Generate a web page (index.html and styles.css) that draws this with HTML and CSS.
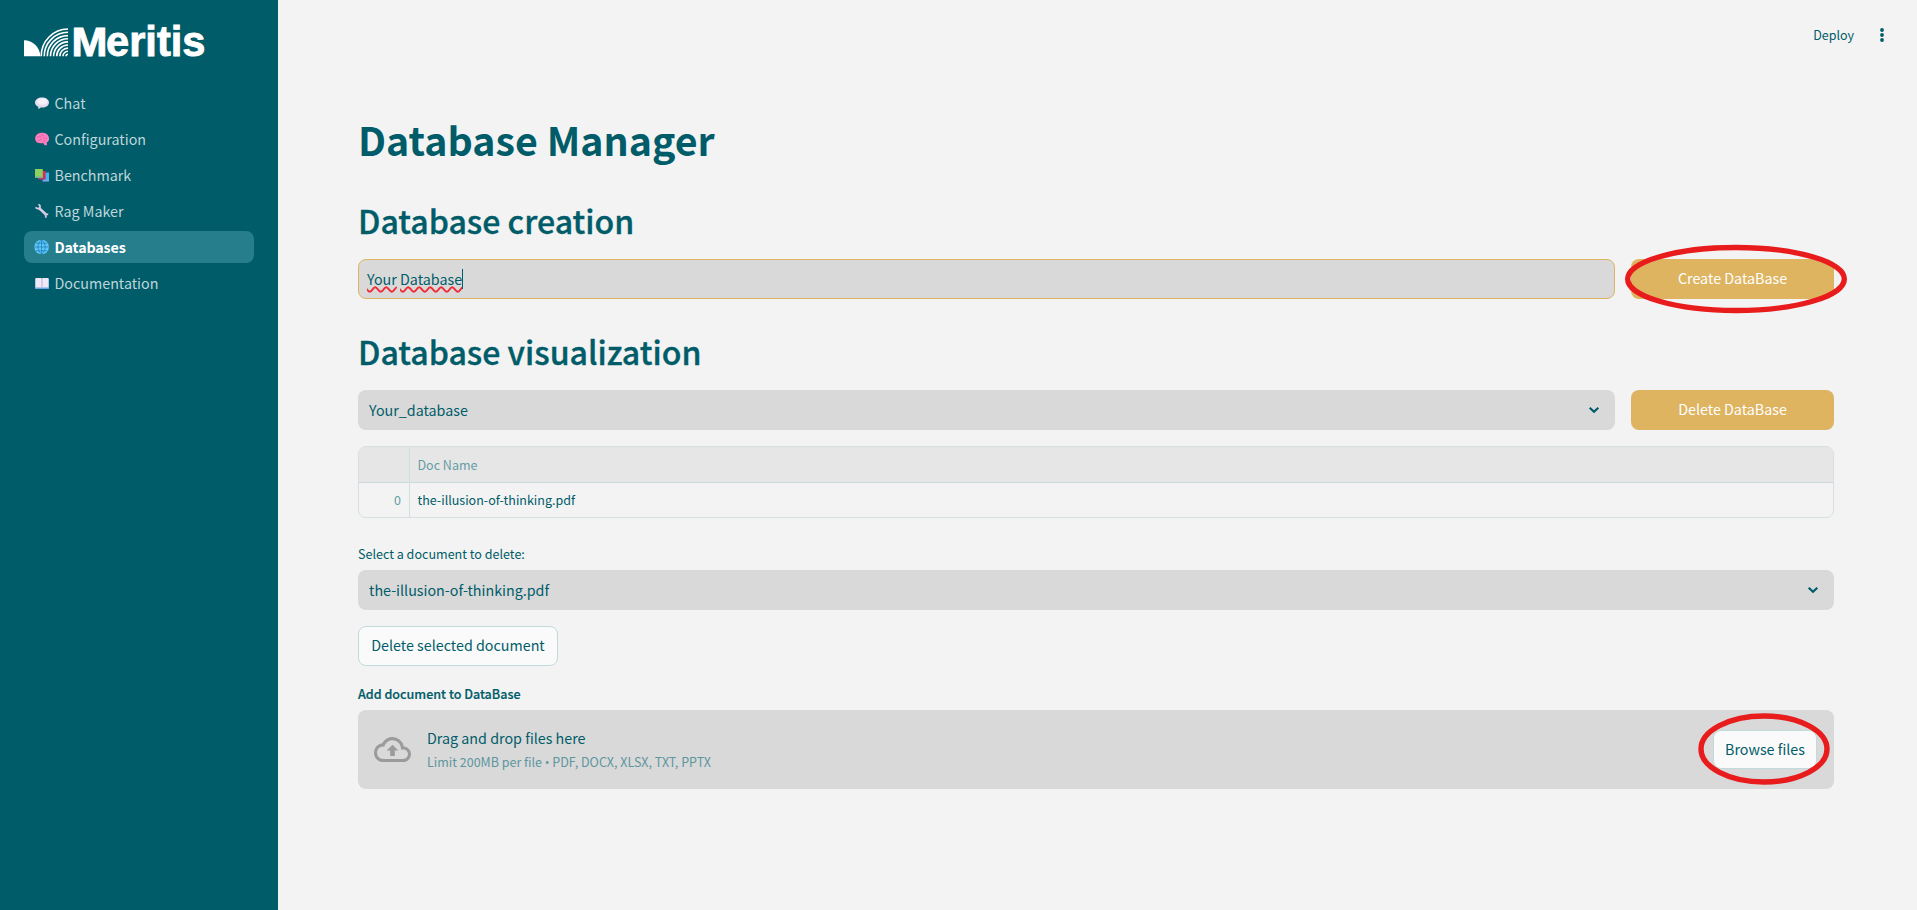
FILE: index.html
```html
<!DOCTYPE html>
<html lang="en">
<head>
<meta charset="utf-8">
<title>Database Manager</title>
<link rel="stylesheet" href="styles.css">
</head>
<body>
<div class="app">
  <aside class="sidebar">
    <svg class="logo" width="230" height="36" viewBox="0 0 230 36">
      <path d="M0 16.200A16.300 16.300 0 0 1 16.300 32.300H0Z" fill="#fff"/>
      <g fill="none" stroke="#fff" stroke-width="1.600">
        <path d="M17.200 32.300A26.800 27.300 0 0 1 44 5"/>
        <path d="M20.200 32.300A23.800 24 0 0 1 44 8.300"/>
        <path d="M23.300 32.300A20.700 20.700 0 0 1 44 11.600"/>
        <path d="M26.500 32.300A17.500 17.500 0 0 1 44 14.800"/>
        <path d="M29.600 32.300A14.400 14.400 0 0 1 44 17.900"/>
        <path d="M32.700 32.300A11.300 11.300 0 0 1 44 21"/>
        <path d="M35.800 32.300A8.200 8.200 0 0 1 44 24.100"/>
        <path d="M38.900 32.300A5.100 5.100 0 0 1 44 27.200"/>
        <path d="M41.900 32.300A2.100 2.100 0 0 1 44 30.200"/>
      </g>
      <text class="logo-text" y="32"><tspan class="logo-cap" x="47.500" textLength="36" lengthAdjust="spacingAndGlyphs">M</tspan><tspan x="82" textLength="99.500" lengthAdjust="spacingAndGlyphs">eritis</tspan></text>
    </svg>
    <nav class="nav">
      <a class="nav-item"><svg class="emoji" viewBox="0 0 16 16"><path d="M8 2.400c4 0 7 2.100 7 5s-3 5.100-7 5.100l-1.300-.1c-.7.8-1.700 1.200-3 1.200.6-.6.700-1.200.6-1.900C2.200 10.800 1 9.400 1 7.400c0-2.900 3-5 7-5Z" fill="#e5dcef"/><ellipse cx="8.500" cy="6.500" rx="5.200" ry="3.200" fill="#f5f0fa"/></svg><span>Chat</span></a>
      <a class="nav-item"><svg class="emoji" viewBox="0 0 16 16"><path d="M1.200 8C1 5 3 2.400 6 2c3-.8 7-.2 8.400 3 1.400 3 .6 5.500-1.600 6.600l.1 2.700H10.500l-1.300-2.200C5 13 1.400 11.600 1.200 8Z" fill="#fc7fbd"/><path d="M3 6.200c2-1.400 2.500.7 4-.7M7 3.500c1.500.2 1.400 1.600 3 1.500M4 9.500c2 .3 2-1.500 4-1M9 7c2-.7 2 1.200 4 .2M8.500 11c1.400-.2 1.500-1.300 3-1.200" fill="none" stroke="#ef50a6" stroke-width=".8"/></svg><span>Configuration</span></a>
      <a class="nav-item"><svg class="emoji" viewBox="0 0 16 16"><path d="M8.500 5.500h6.500V14H9.500Z" fill="#3fb5f1"/><path d="M8.500 13h6.500v1.500H8.500Z" fill="#79a9ef"/><path d="M4.500 4h7.200v8.600H5.500Z" fill="#d62e61"/><path d="M4 10.500h6v1.700H4Z" fill="#a94273"/><path d="M1 2h7.800v8.500H1Z" fill="#8bd25e"/><path d="M1 9.300h7.800v1.500H1Z" fill="#82b999"/></svg><span>Benchmark</span></a>
      <a class="nav-item"><svg class="emoji" viewBox="0 0 16 16"><path d="m5 5 7.500 7" stroke="#d9cbe5" stroke-width="2.500"/><path d="M4.300 1.500c1.600.4 2.200 1.700 1.500 3S3.300 6.200 1.500 4.400M14.200 11.600c-1.500-.8-2.800.2-2.600 1.500.1.700.4 1 1 1.300" fill="none" stroke="#d9cbe5" stroke-width="1.700"/></svg><span>Rag Maker</span></a>
      <a class="nav-item active"><svg class="emoji" viewBox="0 0 16 16"><circle cx="7.600" cy="8" r="7.300" fill="#5cc8fa"/><path d="M7.600 .8v14.400M.6 8h14M2 4.200h11.200M2 11.800h11.200M7.600.8c-4.800 4-4.800 10.400 0 14.400 4.800-4 4.800-10.400 0-14.400" fill="none" stroke="#1c71ad" stroke-width=".65"/></svg><span>Databases</span></a>
      <a class="nav-item"><svg class="emoji" viewBox="0 0 16 16"><path d="M1 4h14v10H1Z" fill="#6ea7e6"/><path d="M1.500 3h5.500l1 .6 1-.6h5.500V12.500H1.500Z" fill="#efe9f8"/><path d="M8 3.600v9" stroke="#bfb1d8"/></svg><span>Documentation</span></a>
    </nav>
  </aside>
  <main class="main">
    <header class="toolbar">
      <span class="deploy">Deploy</span>
      <svg width="6" height="16" viewBox="0 0 6 16" fill="#005c69"><circle cx="3" cy="3" r="1.900"/><circle cx="3" cy="8" r="1.900"/><circle cx="3" cy="13" r="1.900"/></svg>
    </header>
    <section class="content">
      <h1>Database Manager</h1>
      <h2>Database creation</h2>
      <div class="row">
        <div class="field input"><span class="typed"><span class="misspelt">Your</span> <span class="misspelt">Database</span></span><span class="caret"></span></div>
        <div class="ring-host">
          <button class="gold">Create DataBase</button>
          <svg class="ring ring-create" width="224" height="72" viewBox="0 0 224 72"><ellipse cx="112" cy="36" rx="108.300" ry="31.500"/></svg>
        </div>
      </div>
      <h2 class="second">Database visualization</h2>
      <div class="row">
        <div class="field select"><span>Your_database</span><svg class="chev" viewBox="0 0 12 8"><path d="m1.700 1.700 4.300 4 4.300-4"/></svg></div>
        <button class="gold">Delete DataBase</button>
      </div>
      <div class="table">
        <div class="cell head idx"></div><div class="cell head">Doc Name</div>
        <div class="cell idx">0</div><div class="cell name">the-illusion-of-thinking.pdf</div>
      </div>
      <div class="label">Select a document to delete:</div>
      <div class="field select"><span>the-illusion-of-thinking.pdf</span><svg class="chev" viewBox="0 0 12 8"><path d="m1.700 1.700 4.300 4 4.300-4"/></svg></div>
      <button class="plain delete">Delete selected document</button>
      <div class="label strong">Add document to DataBase</div>
      <div class="uploader">
        <svg class="cloud" width="37" height="25" viewBox="0 4 24 16" preserveAspectRatio="none"><path fill="#9b9b9b" d="M19.350 10.040A7.490 7.490 0 0 0 12 4C9.110 4 6.600 5.640 5.350 8.040A5.994 5.994 0 0 0 0 14c0 3.310 2.690 6 6 6h13c2.760 0 5-2.240 5-5 0-2.640-2.050-4.780-4.650-4.960ZM19 18H6c-2.210 0-4-1.790-4-4s1.790-4 4-4h.710C7.370 7.690 9.480 6 12 6c3.040 0 5.500 2.460 5.500 5.500v.5H19c1.660 0 3 1.340 3 3s-1.340 3-3 3Z"/><path fill="#9b9b9b" d="M8.200 12.700h2.300v3.500h3v-3.500h2.300L12 8.900Z"/></svg>
        <div class="drop-text"><div class="drop">Drag and drop files here</div><div class="limit">Limit 200MB per file <span class="dot">•</span> PDF, DOCX, XLSX, TXT, PPTX</div></div>
        <div class="ring-host browse-host">
          <button class="plain browse">Browse files</button>
          <svg class="ring ring-browse" width="134" height="74" viewBox="0 0 134 74"><ellipse cx="67" cy="37" rx="63" ry="33"/></svg>
        </div>
      </div>
    </section>
  </main>
</div>
</body>
</html>
```
FILE: styles.css
```css
* { box-sizing: border-box; }
html, body { height: 100%; overflow: hidden; }
body { margin: 0; background: #f3f3f3; color: #005c69; font: 14.3px/24px "Noto Sans CJK SC", "Open Sans", sans-serif; }
.app { display: flex; height: 100%; overflow: hidden; }
.sidebar { width: 278px; flex: none; background: #005c69; padding: 24px; }
.logo { display: block; overflow: visible; }
.logo-text { font: bold 43px/1 "Liberation Sans", sans-serif; fill: #fff; stroke: #fff; stroke-width: .9px; }
.logo-cap { font-size: 40px; }
.nav { display: flex; flex-direction: column; gap: 4px; margin-top: 27px; }
.nav-item { display: flex; align-items: center; gap: 4.500px; height: 32px; padding-left: 10px; border-radius: 8px; color: #bfd6da; }
.nav-item.active { background: #267e8c; color: #fff; font-weight: 700; letter-spacing: -.15px; }
.emoji { width: 16px; height: 16px; flex: none; }
.main { flex: 1; min-width: 0; }
.toolbar { height: 70px; display: flex; align-items: center; justify-content: flex-end; gap: 25px; padding-right: 32px; font-size: 12.500px; }
.content { padding: 39px 83px 0 80px; }
h1, h2 { margin: 0; white-space: nowrap; }
h1 { font-size: 39.350px; line-height: 60px; font-weight: 700; }
h2 { font-size: 32.100px; line-height: 44px; font-weight: 500; margin-top: 29px; margin-bottom: 17px; -webkit-text-stroke: .35px #005c69; }
h2.second { margin-top: 30px; }
.row { display: grid; grid-template-columns: 1257px 203px; gap: 16px; }
.field { height: 40px; border-radius: 8px; background: #d9d9d9; display: flex; align-items: center; }
.input { border: 1px solid #deb460; padding-left: 8px; }
.misspelt { text-decoration: underline wavy #f02b35 1.500px; text-underline-offset: 1px; text-decoration-skip-ink: none; }
.caret { width: 1px; height: 20px; background: #005c69; }
.select { justify-content: space-between; padding: 0 15px 0 11px; }
.chev { width: 12px; height: 8px; fill: none; stroke: #005c69; stroke-width: 2.200; }
button { font: inherit; color: inherit; border: 0; padding: 0 0 2px; height: 40px; border-radius: 8px; }
.gold { width: 203px; background: #deb460; color: #fff; }
.plain { background: #fafafa; border: 1px solid #c3dadd; }
.ring-host { position: relative; }
.ring { position: absolute; fill: none; stroke: #e81c1c; stroke-width: 5.400px; }
.ring-create { left: -7px; top: -16.500px; }
.ring-browse { left: -16px; top: -18px; }
.table { margin-top: 16px; height: 72px; display: grid; grid-template-columns: 51px 1fr; grid-template-rows: 36px 1fr; border: 1px solid #d5e0e2; border-radius: 8px; overflow: hidden; font-size: 12.500px; }
.cell { padding-left: 7.500px; display: flex; align-items: center; }
.head { background: #e6e6e6; border-bottom: 1px solid #c9d9dd; color: #669da5; }
.idx { justify-content: flex-end; padding-right: 8px; border-right: 1px solid #d0dfe1; color: #669da5; }
.label { font-size: 12.550px; line-height: 24px; margin-top: 24px; margin-bottom: 4px; }
.label.strong { margin-top: 16px; font-weight: 500; -webkit-text-stroke: .2px #005c69; }
.delete { display: block; width: 200px; margin-top: 16px; }
.uploader { height: 79px; border-radius: 8px; background: #d9d9d9; display: flex; align-items: center; padding: 0 17px 0 16px; }
.drop-text { margin-left: 16px; flex: 1; }
.limit { font-size: 12.500px; color: #5d969f; }
.dot { font-family: "Open Sans", sans-serif; line-height: 1; }
.browse { width: 104px; height: 39px; display: block; }
```
